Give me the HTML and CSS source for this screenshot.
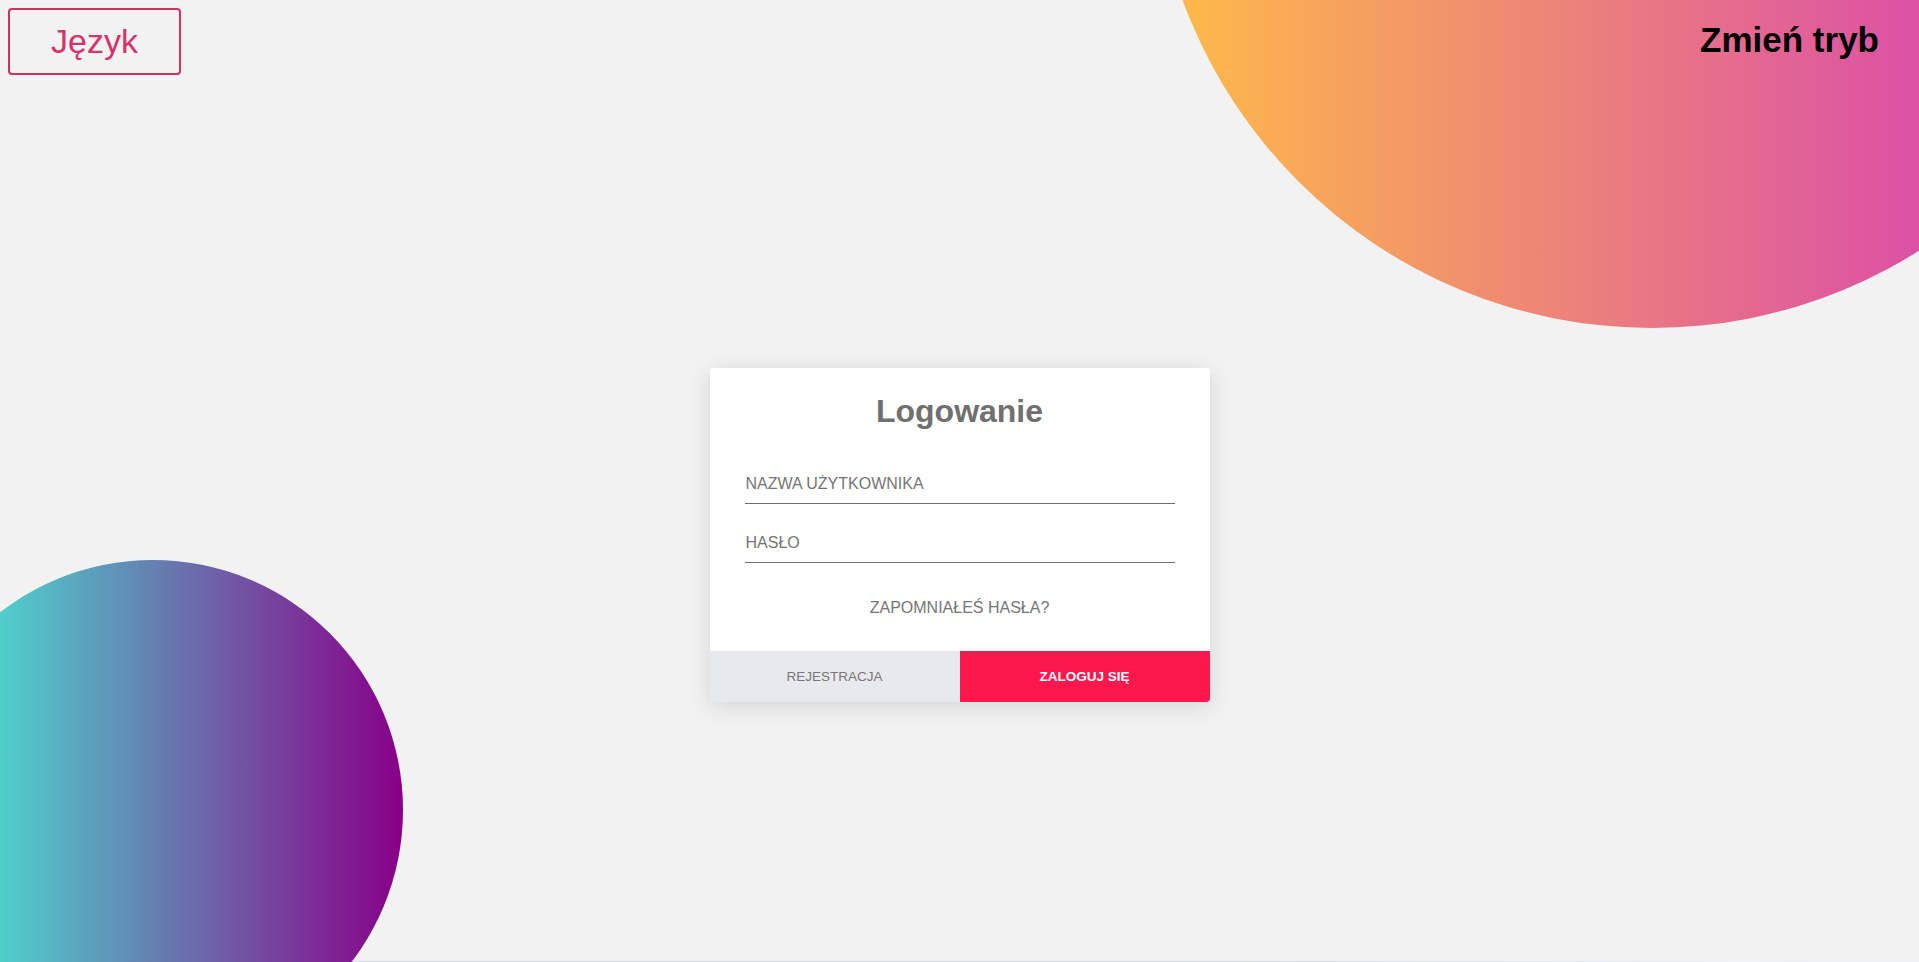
FILE: index.html
```html
<!DOCTYPE html>
<html lang="pl">
<head>
<meta charset="utf-8">
<title>Logowanie</title>
<link rel="stylesheet" href="styles.css">
</head>
<body>
<div class="decor">
  <div class="blob blob-warm"></div>
  <div class="blob blob-cool"></div>
  <div class="bottom-line"></div>
</div>
<header class="topbar">
  <button class="lang-btn" type="button">Język</button>
  <button class="mode-btn" type="button">Zmień tryb</button>
</header>
<main class="stage">
  <form class="card">
    <div class="card-body">
      <h1 class="card-title">Logowanie</h1>
      <input class="field" type="text" placeholder="NAZWA UŻYTKOWNIKA">
      <input class="field field-second" type="password" placeholder="HASŁO">
      <a class="forgot" href="#">ZAPOMNIAŁEŚ HASŁA?</a>
    </div>
    <div class="card-actions">
      <button class="action action-register" type="button">REJESTRACJA</button>
      <button class="action action-login" type="submit">ZALOGUJ SIĘ</button>
    </div>
  </form>
</main>
</body>
</html>
```

FILE: styles.css
```css
* {
  box-sizing: border-box;
}

html, body {
  margin: 0;
  height: 100%;
}

body {
  position: relative;
  overflow: hidden;
  background: #f2f2f2;
  font-family: "Liberation Sans", Arial, sans-serif;
}

.decor {
  position: absolute;
  inset: 0;
  overflow: hidden;
  z-index: 0;
}

.blob {
  position: absolute;
  border-radius: 50%;
}

.blob-warm {
  width: 1000px;
  height: 1000px;
  top: -672px;
  right: -233px;
  background: linear-gradient(to right, #ffbd46, #d130c2);
}

.blob-cool {
  width: 500px;
  height: 500px;
  top: 560px;
  left: -97px;
  background: linear-gradient(to right, #4fd0cc 19%, #880088 100%);
}

.bottom-line {
  position: absolute;
  left: 0;
  right: 0;
  bottom: 0;
  height: 1px;
  background: linear-gradient(to right, #cfd6e4 60%, #eef0f4 95%);
  z-index: -1;
}

.topbar {
  position: relative;
  z-index: 1;
  display: flex;
  justify-content: space-between;
  align-items: flex-start;
  padding: 8px 40px 0 8px;
}

.lang-btn {
  width: 173px;
  height: 67px;
  display: flex;
  align-items: center;
  justify-content: center;
  background: transparent;
  border: 2px solid #d3305f;
  border-radius: 4px;
  color: #d6336a;
  font-family: "Liberation Sans", Arial, sans-serif;
  font-size: 34px;
  padding: 0;
}

.mode-btn {
  margin-top: 12px;
  background: none;
  border: none;
  padding: 0;
  color: #000;
  font-family: "Liberation Sans", Arial, sans-serif;
  font-weight: bold;
  font-size: 35px;
  line-height: 40px;
}

.stage {
  position: relative;
  z-index: 1;
  display: flex;
  justify-content: center;
  padding-top: 293px;
}

.card {
  width: 500px;
  background: #fff;
  border-radius: 4px;
  overflow: hidden;
  box-shadow: 0 4px 22px rgba(0, 0, 0, 0.13);
}

.card-body {
  display: flex;
  flex-direction: column;
  padding: 25px 35px 34px;
}

.card-title {
  margin: 0 0 35px;
  text-align: center;
  color: #707070;
  font-size: 32px;
  line-height: 37px;
  font-weight: bold;
}

.field {
  width: 100%;
  height: 39px;
  border: none;
  border-bottom: 1px solid #6e6e6e;
  padding: 0 0 0 1px;
  background: transparent;
  font-family: "Liberation Sans", Arial, sans-serif;
  font-size: 16px;
  color: #555;
  outline: none;
}

.field::placeholder {
  color: #757575;
}

.field-second {
  margin-top: 20px;
}

.forgot {
  margin-top: 36px;
  align-self: center;
  color: #757575;
  text-decoration: none;
  font-size: 16px;
  line-height: 18px;
}

.card-actions {
  display: grid;
  grid-template-columns: 1fr 1fr;
  height: 51px;
}

.action {
  border: none;
  margin: 0;
  padding: 0;
  font-family: "Liberation Sans", Arial, sans-serif;
  font-size: 13.5px;
}

.action-register {
  background: #e8e9ec;
  color: #777;
}

.action-login {
  background: #fc174d;
  color: #fff;
  font-weight: bold;
}
```
